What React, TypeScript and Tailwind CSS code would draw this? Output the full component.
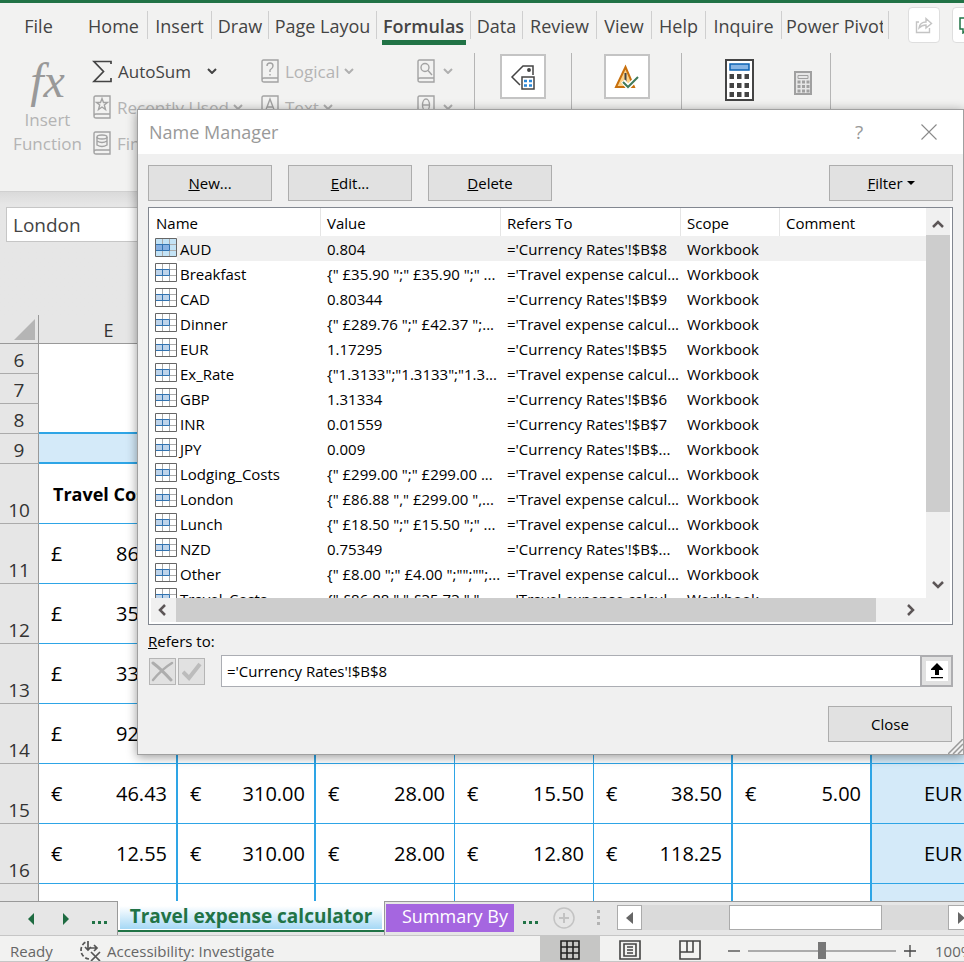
import React from "react";

type Tab = { name: string; width: string };

const tabs: Tab[] = [
  { name: "Home", width: "w-[68px]" },
  { name: "Insert", width: "w-[64px]" },
  { name: "Draw", width: "w-[57px]" },
  { name: "Page Layou", width: "w-[108px]" },
  { name: "Formulas", width: "w-[94px]" },
  { name: "Data", width: "w-[52px]" },
  { name: "Review", width: "w-[74px]" },
  { name: "View", width: "w-[55px]" },
  { name: "Help", width: "w-[54px]" },
  { name: "Inquire", width: "w-[76px]" },
  { name: "Power Pivot", width: "w-[107px]" },
];

const travel = "='Travel expense calcul...";

const names: [string, string, string][] = [
  ["AUD", "0.804", "='Currency Rates'!$B$8"],
  ["Breakfast", '{" £35.90 ";" £35.90 ";" ...', travel],
  ["CAD", "0.80344", "='Currency Rates'!$B$9"],
  ["Dinner", '{" £289.76 ";" £42.37 ";...', travel],
  ["EUR", "1.17295", "='Currency Rates'!$B$5"],
  ["Ex_Rate", '{"1.3133";"1.3133";"1.3...', travel],
  ["GBP", "1.31334", "='Currency Rates'!$B$6"],
  ["INR", "0.01559", "='Currency Rates'!$B$7"],
  ["JPY", "0.009", "='Currency Rates'!$B$..."],
  ["Lodging_Costs", '{" £299.00 ";" £299.00 ...', travel],
  ["London", '{" £86.88 "," £299.00 ",...', travel],
  ["Lunch", '{" £18.50 ";" £15.50 ";" ...', travel],
  ["NZD", "0.75349", "='Currency Rates'!$B$..."],
  ["Other", '{" £8.00 ";" £4.00 ";"";"";...', travel],
  ["Travel_Costs", '{" £86.88 "," £35.73 ","...', travel],
];

type Row = { n: number; cur?: string; v?: string[]; last?: string };

const costRows: Row[] = [
  { n: 11, cur: "£", v: ["86.88"] },
  { n: 12, cur: "£", v: ["35.73"] },
  { n: 13, cur: "£", v: ["33.50"] },
  { n: 14, cur: "£", v: ["92.00"] },
  { n: 15, cur: "€", v: ["46.43", "310.00", "28.00", "15.50", "38.50", "5.00"], last: "EUR" },
  { n: 16, cur: "€", v: ["12.55", "310.00", "28.00", "12.80", "118.25", ""], last: "EUR" },
];

const edges = [
  "border-r-2 border-r-[#2ea5e6]",
  "border-r-2 border-r-[#2ea5e6]",
  "border-r border-r-[#2ea5e6]",
  "border-r border-r-[#2ea5e6]",
  "border-r-2 border-r-[#2ea5e6]",
  "border-r-2 border-r-[#2ea5e6]",
];

function Chevron({ dark }: { dark?: boolean }) {
  return (
    <svg width="10" height="6" viewBox="0 0 10 6" fill="none" stroke={dark ? "#444" : "#b0b0b0"} strokeWidth="2">
      <path d="M1 1l4 4 4-4" />
    </svg>
  );
}

function Book({ children }: { children: React.ReactNode }) {
  return (
    <svg width="18" height="24" viewBox="0 0 18 24" fill="none" stroke="#a3a3a3" strokeWidth="1.4" className="shrink-0">
      <path d="M1 21V2.500Q1 1 2.500 1H17v22H3Q1 23 1 21Q1 19 3 19H17" />
      {children}
    </svg>
  );
}

function RibbonItem({ label, icon, dark }: { label?: string; icon: React.ReactNode; dark?: boolean }) {
  return (
    <button className={"flex h-9 items-center whitespace-nowrap text-[17px] " + (dark ? "text-[#444]" : "text-[#b4b4b4]")}>
      {icon}
      {label && <span className="ml-[6px] mr-1 pt-[2px]">{label}</span>}
      <span className={dark ? "ml-3" : label ? "" : "ml-2"}>
        <Chevron dark={dark} />
      </span>
    </button>
  );
}

function Ribbon() {
  return (
    <header className="shrink-0 bg-[#f2f2f1]">
      <div className="h-[3px] bg-[#217346]" />
      <nav className="flex h-[44px] items-start text-[18px] text-[#444]">
        <button className="h-[46px] w-[80px] shrink-0 pr-[3px] text-center">File</button>
        {tabs.map((t) => (
          <button key={t.name} className={"relative h-[46px] shrink-0 overflow-hidden whitespace-nowrap pr-px " + t.width}>
            {t.name === "Formulas" ? (
              <span className="mx-auto block w-[84px] border-b-[5px] border-[#217346] pt-[5px] text-[18px] font-semibold leading-[28px]">{t.name}</span>
            ) : (
              <span className={t.name.startsWith("Power") ? "ml-[4px] block w-[97px] overflow-hidden text-left" : "block"}>{t.name}</span>
            )}
            <span className="absolute right-0 top-2 h-[28px] w-px bg-[#cfcfcf]" />
          </button>
        ))}
        <button aria-label="Share" className="ml-[19px] mt-1 flex h-[36px] w-[32px] shrink-0 items-center justify-center rounded border border-[#dedede] bg-white">
          <svg width="18" height="18" viewBox="0 0 18 18" fill="none" stroke="#c4c4c4" strokeWidth="1.4">
            <path d="M4 6H1.500V16.500H14.500V12M4 12Q5 6 11 6V2.500L16.500 7.500L11 12V9Q7 9 4 12Z" />
          </svg>
        </button>
        <button aria-label="Comments" className="ml-[12px] mt-1 flex h-[36px] w-[32px] shrink-0 items-center rounded border border-[#dedede] bg-white pl-[6px]">
          <svg width="18" height="18" viewBox="0 0 18 18" fill="none" stroke="#217346" strokeWidth="1.5">
            <path d="M1 2H17V13H8L4 17V13H1Z" />
          </svg>
        </button>
      </nav>
      <div className="flex h-[145px] items-start border-b border-[#d0d0d0] pt-[6px]">
        <button className="flex w-[92px] shrink-0 flex-col items-center pl-[3px] pt-px text-[17px] leading-6 text-[#b4b4b4]">
          <span className="flex h-[54px] items-center font-['Liberation_Serif',serif] text-[48px] italic text-[#999]">fx</span>
          Insert
          <br />
          Function
        </button>
        <div className="flex w-[168px] shrink-0 flex-col">
          <RibbonItem
            dark
            label="AutoSum"
            icon={
              <svg width="20" height="23" viewBox="0 0 20 23" fill="none" stroke="#444" strokeWidth="1.7">
                <path d="M19 4V1.500H2L11.500 11.500L2 21.500H19V18" />
              </svg>
            }
          />
          <RibbonItem label="Recently Used" icon={<span className="pl-px"><Book><path d="M9 3.500l1.500 4h4l-3.200 2.500 1.200 4.500L9 12 5.500 14.500l1.200-4.500L3.500 7.500h4z" /></Book></span>} />
          <RibbonItem label="Financial" icon={<span className="pl-px"><Book><ellipse cx="9" cy="6" rx="5" ry="2" /><path d="M4 6v8q5 3 10 0V6M4 10q5 3 10 0" /></Book></span>} />
        </div>
        <div className="flex w-[157px] shrink-0 flex-col pl-px">
          <RibbonItem label="Logical" icon={<Book><path d="M6 7q0-3 3-3t3 3q0 2-3 4v2M9 15v1.500" /></Book>} />
          <RibbonItem label="Text" icon={<Book><path d="M4.500 16L9 4l4.500 12M6 12h6" /></Book>} />
        </div>
        <div className="flex w-[57px] shrink-0 flex-col">
          <RibbonItem icon={<Book><circle cx="8" cy="8.500" r="4" /><path d="M11 11.500l4 4.500" /></Book>} />
          <RibbonItem icon={<Book><ellipse cx="9" cy="10" rx="3.500" ry="6" /><path d="M5.500 10h7" /></Book>} />
        </div>
        <div className="flex w-[97px] shrink-0 justify-center border-l border-[#b5b5b5] pb-20">
          <button aria-label="Defined Names" className="mt-px flex h-[45px] w-[46px] items-center justify-center border-2 border-[#c4c4c4] bg-white">
            <svg width="26" height="26" viewBox="0 0 26 26" fill="none" stroke="#444" strokeWidth="1.5">
              <path d="M10 21L2 13L13 2H23V11" />
              <circle cx="19" cy="6" r="1.200" fill="#444" />
              <path d="M12 13H24V25H12Z" fill="#fff" />
              <path d="M14 17h3M14 21.500h3M19 17h3M19 21.500h3" stroke="#2b88d8" strokeWidth="2.500" />
            </svg>
          </button>
        </div>
        <div className="flex w-[110px] shrink-0 justify-center border-l border-[#b5b5b5] pb-20">
          <button aria-label="Formula Auditing" className="mt-px flex h-[45px] w-[46px] items-center justify-center border-2 border-[#c4c4c4] bg-white">
            <svg width="26" height="26" viewBox="0 0 26 26" fill="none">
              <path d="M11.500 3L2 23H20Z" fill="#fbd38a" stroke="#c8700d" strokeWidth="2" />
              <path d="M11.500 9V18" stroke="#444" strokeWidth="2" />
              <path d="M9 17l5 6L24 13" stroke="#fff" strokeWidth="5" />
              <path d="M9 18l5 5L24 13" stroke="#3f7a5a" strokeWidth="2" />
            </svg>
          </button>
        </div>
        <div className="flex w-[150px] shrink-0 items-start gap-[40px] border-x border-[#b5b5b5] pb-20 pl-[43px]">
          <svg width="29" height="42" viewBox="0 0 29 42" className="mt-[6px]">
            <path d="M1 1H28V41H1Z" fill="#fff" stroke="#444" strokeWidth="2" />
            <path d="M5 5H24V11H5Z" fill="#86b4e4" stroke="#0b62b3" strokeWidth="1.500" />
            <path d="M4.500 17.500h20M4.500 26.500h20M4.500 35.500h20" stroke="#444" strokeWidth="5" strokeDasharray="4.500 3" />
          </svg>
          <svg width="18" height="24" viewBox="0 0 18 24" className="mt-[18px]">
            <path d="M1 1H17V23H1Z" fill="#e6e6e6" stroke="#a0a0a0" strokeWidth="2" />
            <path d="M4 4.500H14V7.500H4Z" fill="none" stroke="#a0a0a0" />
            <path d="M3.500 11h12M3.500 15.500h12M3.500 20h12" stroke="#a0a0a0" strokeWidth="3" strokeDasharray="3 1.500" />
          </svg>
        </div>
      </div>
    </header>
  );
}

function RowHead({ n }: { n?: number }) {
  return (
    <th scope="row" className="border-b border-r border-b-[#ababab] border-r-[#999] bg-[#e6e6e6] p-0 align-bottom text-[19px] font-normal leading-[26px] text-[#333]">
      {n}
    </th>
  );
}

function Sheet() {
  return (
    <main className="min-h-0 flex-1 overflow-hidden bg-white">
      <div className="h-[123px] bg-gradient-to-b from-[#dadada] to-[#e6e6e6] to-10% pl-[6px] pt-[15px]">
        <input aria-label="Name Box" defaultValue="London" className="block h-[35px] w-[200px] border border-[#c6c6c6] bg-white px-[6px] text-[19px] text-[#444]" />
      </div>
      <table className="w-full table-fixed border-separate border-spacing-0">
        <colgroup>
          <col className="w-[39px]" />
          <col className="w-[139px]" />
          <col className="w-[138px]" />
          <col className="w-[139px]" />
          <col className="w-[139px]" />
          <col className="w-[139px]" />
          <col className="w-[139px]" />
          <col />
        </colgroup>
        <thead>
          <tr className="h-[29px] bg-[#e6e6e6] text-[18px] text-[#333]">
            <td className="border-b border-r border-[#999] p-0 pl-[14px]">
              <svg width="21" height="21" viewBox="0 0 21 21"><path d="M21 0V21H0Z" fill="#b5b5b5" /></svg>
            </td>
            <th scope="col" className="border-b border-[#999] p-0 pt-[3px] font-normal leading-[25px]">E</th>
            <td colSpan={6} className="border-b border-[#999] p-0" />
          </tr>
        </thead>
        <tbody className="text-[20px] text-black">
          {[6, 7, 8].map((n) => (
            <tr key={n} className="h-[30px]">
              <RowHead n={n} />
              <td colSpan={7} className={n === 8 ? "border-b-2 border-[#2ea5e6] p-0" : "p-0"} />
            </tr>
          ))}
          <tr className="h-[30px]">
            <RowHead n={9} />
            <td colSpan={7} className="border-b-2 border-[#2ea5e6] bg-[#d4eaf9] p-0" />
          </tr>
          <tr className="h-[60px]">
            <RowHead n={10} />
            <td className="overflow-hidden whitespace-nowrap border-b border-[#2ea5e6] p-0 pl-[14px] pt-[2px] text-[18px] font-bold">Travel Costs</td>
            <td colSpan={6} className="border-b border-[#2ea5e6]" />
          </tr>
          {costRows.map((r) => (
            <tr key={r.n} className="h-[60px]">
              <RowHead n={r.n} />
              {edges.map((e, i) => (
                <td key={i} className={"border-b border-b-[#2ea5e6] p-0 pt-px " + e}>
                  {r.v?.[i] && (
                    <div className="flex justify-between pl-[12px] pr-[9px]">
                      <span>{r.cur}</span>
                      <span>{r.v[i]}</span>
                    </div>
                  )}
                </td>
              ))}
              <td className="border-b border-[#2ea5e6] bg-[#d4eaf9] p-0 pr-[2px] pt-px text-right">{r.last}</td>
            </tr>
          ))}
          <tr className="h-[60px]">
            <RowHead />
            {edges.map((e, i) => (
              <td key={i} className={e} />
            ))}
            <td className="bg-[#d4eaf9]" />
          </tr>
        </tbody>
      </table>
    </main>
  );
}

function SheetTabs() {
  return (
    <div className="flex h-[34px] shrink-0 items-start overflow-hidden bg-[#e6e6e6]">
      <div className="flex h-[34px] w-[118px] shrink-0 items-center border-r border-t border-[#999] pl-[27px]">
        <button aria-label="Previous sheet" className="w-[35px]"><svg width="8" height="12" viewBox="0 0 8 12"><path d="M7 0V12L1 6Z" fill="#1e6b41" /></svg></button>
        <button aria-label="Next sheet" className="w-[30px]"><svg width="8" height="12" viewBox="0 0 8 12"><path d="M1 0V12L7 6Z" fill="#1e6b41" /></svg></button>
        <Dots />
      </div>
      <button className="h-[31px] w-[266px] shrink-0 whitespace-nowrap border-b-2 border-[#217346] bg-white px-[2px] pb-px pt-[5px] text-[19px] font-bold text-[#217346]">
        <span className="flex h-[23px] items-center justify-center bg-gradient-to-b from-white to-[#a5d8f5] pb-[2px]">Travel expense calculator</span>
      </button>
      <div className="flex h-[34px] min-w-0 flex-1 items-start border-l border-t border-[#999] pl-px">
        <button className="mt-[2px] h-[28px] w-[128px] shrink-0 overflow-hidden whitespace-nowrap bg-[#a566e0] pl-[16px] text-left text-[18px] leading-[24px] text-white"><span className="block h-full">Summary By</span></button>
        <div className="flex h-[32px] w-[39px] shrink-0 items-center pl-[9px]"><Dots /></div>
        <button aria-label="New sheet" className="mt-[5px] shrink-0">
          <svg width="22" height="22" viewBox="0 0 22 22" fill="none" stroke="#c3c3c3" strokeWidth="1.500">
            <circle cx="11" cy="11" r="10" />
            <path d="M6 11H16M11 6V16" strokeWidth="2" />
          </svg>
        </button>
        <div className="ml-[22px] mt-[8px] flex w-[20px] shrink-0 flex-col gap-[3px]">
          <i className="h-[3px] w-[3px] bg-[#b3b3b3]" />
          <i className="h-[3px] w-[3px] bg-[#b3b3b3]" />
          <i className="h-[3px] w-[3px] bg-[#b3b3b3]" />
        </div>
        <div className="mt-[3px] flex h-[25px] min-w-0 flex-1 bg-[#dadada]">
          <button aria-label="Scroll left" className="flex w-[25px] shrink-0 items-center justify-center border border-[#ababab] bg-white"><svg width="7" height="12" viewBox="0 0 7 12"><path d="M7 0V12L0 6Z" fill="#666" /></svg></button>
          <div className="ml-[87px] mr-[66px] flex-1 border border-[#ababab] bg-white" />
          <button aria-label="Scroll right" className="flex w-[16px] shrink-0 items-center border border-r-0 border-[#ababab] bg-white pl-[9px]"><svg width="7" height="12" viewBox="0 0 7 12" className="shrink-0"><path d="M0 0V12L7 6Z" fill="#666" /></svg></button>
        </div>
      </div>
    </div>
  );
}

function Dots() {
  return (
    <div className="mt-2 flex gap-[3px]">
      <i className="h-[3px] w-[3px] bg-[#217346]" />
      <i className="h-[3px] w-[3px] bg-[#217346]" />
      <i className="h-[3px] w-[3px] bg-[#217346]" />
    </div>
  );
}

function StatusBar() {
  return (
    <footer className="flex h-[27px] shrink-0 items-start overflow-hidden whitespace-nowrap border-y border-[#c6c6c6] bg-[#f2f2f1] text-[15px] leading-[31px] text-[#666]">
      <span className="w-[78px] shrink-0 pl-[10px]">Ready</span>
      <svg width="23" height="22" viewBox="0 0 23 22" fill="none" stroke="#555" strokeWidth="1.700" className="mt-1 shrink-0">
        <path d="M11 19A9 9 0 0 1 8 2" strokeDasharray="4 2" />
        <path d="M10 1V10M7 7l3 3 3-3M11 8H19M16 5l3 3-3 3M13 12l9 9M22 12l-9 9" />
      </svg>
      <span className="ml-[6px] flex-1">Accessibility: Investigate</span>
      <button aria-label="Normal view" className="flex h-[27px] w-[60px] shrink-0 items-center justify-center bg-[#c6c6c5] pt-px">
        <svg width="20" height="20" viewBox="0 0 20 20" fill="none" stroke="#222" strokeWidth="1.600"><path d="M1 1H19V19H1ZM7 1V19M13 1V19M1 7H19M1 13H19" /></svg>
      </button>
      <button aria-label="Page layout view" className="flex h-[27px] w-[60px] shrink-0 items-center justify-center pt-px">
        <svg width="22" height="20" viewBox="0 0 22 20" fill="none" stroke="#444" strokeWidth="1.600"><path d="M1 1H21V19H1ZM5 4H17V16H5ZM8 7H14M8 10H14M8 13H14" /></svg>
      </button>
      <button aria-label="Page break view" className="flex h-[27px] w-[60px] shrink-0 items-center justify-center pt-px">
        <svg width="22" height="20" viewBox="0 0 22 20" fill="none" stroke="#444" strokeWidth="1.600"><path d="M1 1H21V19H1ZM1 12H14V1M8 1V12" /></svg>
      </button>
      <button aria-label="Zoom out" className="ml-[8px] flex h-[30px] shrink-0 items-center"><svg width="12" height="12" viewBox="0 0 12 12" stroke="#444" strokeWidth="1.300"><path d="M0 6H12" /></svg></button>
      <input
        type="range"
        aria-label="Zoom"
        defaultValue={50}
        className="ml-[8px] mt-[6px] h-[18px] w-[148px] shrink-0 appearance-none bg-transparent [&::-webkit-slider-runnable-track]:h-[2px] [&::-webkit-slider-runnable-track]:bg-[#ababab] [&::-webkit-slider-thumb]:mt-[-8px] [&::-webkit-slider-thumb]:h-[17px] [&::-webkit-slider-thumb]:w-[8px] [&::-webkit-slider-thumb]:appearance-none [&::-webkit-slider-thumb]:bg-[#777]"
      />
      <button aria-label="Zoom in" className="ml-[8px] flex h-[30px] shrink-0 items-center"><svg width="12" height="12" viewBox="0 0 12 12" stroke="#444" strokeWidth="1.300"><path d="M0 6H12M6 0V12" /></svg></button>
      <span className="ml-[19px] w-[29px] shrink-0 overflow-hidden">100%</span>
    </footer>
  );
}

function RangeIcon({ selected }: { selected?: boolean }) {
  return (
    <svg width="22" height="19" viewBox="0 0 22 19" fill="none">
      <path d="M0.500 0.500H21.500V18.500H0.500Z" fill={selected ? "#c3e3f6" : "#fff"} />
      <path d="M7.500 1V18M14.500 1V18M1 6.500H21M1 12.500H21" stroke="#ababab" />
      <path d="M1 6.500H14.500V12.500H1M7.500 6.500V12.500" fill={selected ? "#86b0e2" : "#bfd4ea"} stroke="#3273b0" />
      <path d="M0.500 0.500H21.500V18.500H0.500Z" stroke="#666" />
    </svg>
  );
}

function DialogButton({ children, className = "" }: { children: React.ReactNode; className?: string }) {
  return (
    <button className={"flex h-[36px] w-[124px] items-center justify-center border border-[#adadad] bg-[#e1e1e1] text-[15px] text-black " + className}>
      {children}
    </button>
  );
}

function Arrow({ d, w, h }: { d: string; w: number; h: number }) {
  return (
    <svg width={w} height={h} viewBox={"0 0 " + w + " " + h} fill="none" stroke="#5c5657" strokeWidth="2.500"><path d={d} /></svg>
  );
}

function NameManager() {
  const head = "border-r border-[#e5e5e5] p-0 pl-[6px] pt-[2px] text-left font-normal";
  const cell = "overflow-hidden whitespace-nowrap p-0 pl-[6px] pt-px leading-[22px]";
  return (
    <section role="dialog" aria-label="Name Manager" className="absolute left-[137px] right-0 top-[109px] border border-[#a0a0a0] bg-[#f0f0f0] text-[15px] text-black shadow-[0_2px_10px_rgba(0,0,0,0.4)]">
      <div className="flex h-[44px] items-center bg-white pl-[11px] pr-[26px]">
        <h1 className="flex-1 text-[18px] text-[#999]">Name Manager</h1>
        <button aria-label="Help" className="w-[40px] text-[19px] text-[#999]">?</button>
        <button aria-label="Close window" className="ml-[42px]">
          <svg width="16" height="16" viewBox="0 0 16 16" fill="none" stroke="#8a8a8a" strokeWidth="1.100"><path d="M0.500 0.500l15 15M15.500 0.500l-15 15" /></svg>
        </button>
      </div>
      <div className="px-[10px] pb-[12px] pt-[11px]">
        <div className="flex gap-4">
          <DialogButton><span><u>N</u>ew...</span></DialogButton>
          <DialogButton><span><u>E</u>dit...</span></DialogButton>
          <DialogButton><span><u>D</u>elete</span></DialogButton>
          <DialogButton className="ml-auto">
            <span className="pt-px"><u>F</u>ilter</span>
            <svg width="8" height="4" viewBox="0 0 8 4" className="ml-[4px]"><path d="M0 0H8L4 4Z" fill="#000" /></svg>
          </DialogButton>
        </div>
        <div className="mt-[6px] flex h-[418px] flex-col border border-[#828790] bg-white">
          <div className="flex min-h-0 flex-1">
            <div className="min-w-0 flex-1 overflow-hidden">
              <table className="w-full table-fixed border-separate border-spacing-0">
                <colgroup>
                  <col className="w-[172px]" />
                  <col className="w-[180px]" />
                  <col className="w-[180px]" />
                  <col className="w-[99px]" />
                  <col />
                </colgroup>
                <thead>
                  <tr className="h-[28px]">
                    <th className="border-r border-[#e5e5e5] p-0 pl-[7px] pt-[2px] text-left font-normal">Name</th>
                    <th className={head}>Value</th>
                    <th className={head}>Refers To</th>
                    <th className={head}>Scope</th>
                    <th className="p-0 pl-[6px] pt-[2px] text-left font-normal">Comment</th>
                  </tr>
                </thead>
                <tbody>
                  {names.map(([name, value, refers], i) => (
                    <tr key={name} className={i === 0 ? "h-[25px] bg-[#f0f0f0]" : "h-[25px]"}>
                      <td className="bg-white p-0 pl-[6px]">
                        <div className="flex h-[25px] items-start">
                          <span className="pt-[2px]"><RangeIcon selected={i === 0} /></span>
                          <span className={"flex h-[25px] flex-1 items-center pl-[3px] pt-[2px] " + (i === 0 ? "bg-[#f0f0f0]" : "")}>{name}</span>
                        </div>
                      </td>
                      <td className={cell}>{value}</td>
                      <td className={cell}>{refers}</td>
                      <td className={cell}>Workbook</td>
                      <td />
                    </tr>
                  ))}
                </tbody>
              </table>
            </div>
            <div className="flex w-[26px] shrink-0 flex-col items-center border-r-2 border-white bg-[#f0f0f0]">
              <button aria-label="Scroll up" className="flex h-[27px] items-center pt-1"><Arrow w={12} h={9} d="M1 8l5-5 5 5" /></button>
              <div className="h-[277px] w-full bg-[#cdcdcd]" />
              <button aria-label="Scroll down" className="mt-auto flex h-[25px] items-center"><Arrow w={12} h={9} d="M1 1l5 5 5-5" /></button>
            </div>
          </div>
          <div className="flex h-[26px] shrink-0 border-x-2 border-b-2 border-white bg-[#f0f0f0]">
            <button aria-label="Scroll names left" className="flex w-[25px] items-center justify-center pr-1"><Arrow w={9} h={12} d="M8 1l-5 5 5 5" /></button>
            <div className="flex-1 bg-[#cdcdcd]" />
            <button aria-label="Scroll names right" className="mr-[23px] flex w-[51px] items-center justify-center pl-[19px]"><Arrow w={9} h={12} d="M1 1l5 5-5 5" /></button>
          </div>
        </div>
        <label htmlFor="refers" className="mt-[6px] block leading-[20px]"><u>R</u>efers to:</label>
        <div className="mt-[4px] flex h-[32px] items-center">
          <button aria-label="Cancel" className="ml-px flex h-[27px] w-[27px] items-center justify-center border border-[#b5b5b5] bg-[#e1e1e1]">
            <svg width="23" height="21" viewBox="0 0 23 21" fill="none" stroke="#adadad" strokeLinecap="round"><path d="M2 2Q10 8 20 19" strokeWidth="3" /><path d="M21 2Q11 8 2 19" strokeWidth="2.500" /></svg>
          </button>
          <button aria-label="Enter" className="ml-[2px] flex h-[27px] w-[27px] items-center justify-center border border-[#b5b5b5] bg-[#e1e1e1]">
            <svg width="20" height="19" viewBox="0 0 20 19" fill="none" stroke="#bcbcbc" strokeWidth="4"><path d="M1 10l6 6L18 2" /></svg>
          </button>
          <input id="refers" defaultValue="='Currency Rates'!$B$8" className="ml-[16px] h-[32px] min-w-0 flex-1 border border-[#abadb3] bg-white pl-[5px]" />
          <button aria-label="Collapse dialog" className="-ml-px flex h-[32px] w-[33px] shrink-0 items-center justify-center border-2 border-[#adadb0] bg-[#e1e1e1]">
            <span className="flex h-[20px] w-[22px] items-center justify-center bg-white">
              <svg width="14" height="16" viewBox="0 0 14 16"><path d="M7 0L13 6V7H9V12H5V7H1V6ZM1 14H13V15.300H1Z" fill="#000" /></svg>
            </span>
          </button>
        </div>
        <DialogButton className="ml-auto mr-px mt-[19px]">Close</DialogButton>
      </div>
      <svg width="15" height="15" viewBox="0 0 15 15" className="absolute bottom-0 right-0" stroke="#999" strokeWidth="1.500"><path d="M0 15L15 0M5 15L15 5M10 15L15 10" /></svg>
    </section>
  );
}

export default function App() {
  return (
    <div className="relative flex h-screen flex-col overflow-hidden bg-[#e6e6e6] font-['Open_Sans','Noto_Sans',sans-serif]">
      <Ribbon />
      <Sheet />
      <SheetTabs />
      <StatusBar />
      <NameManager />
    </div>
  );
}
